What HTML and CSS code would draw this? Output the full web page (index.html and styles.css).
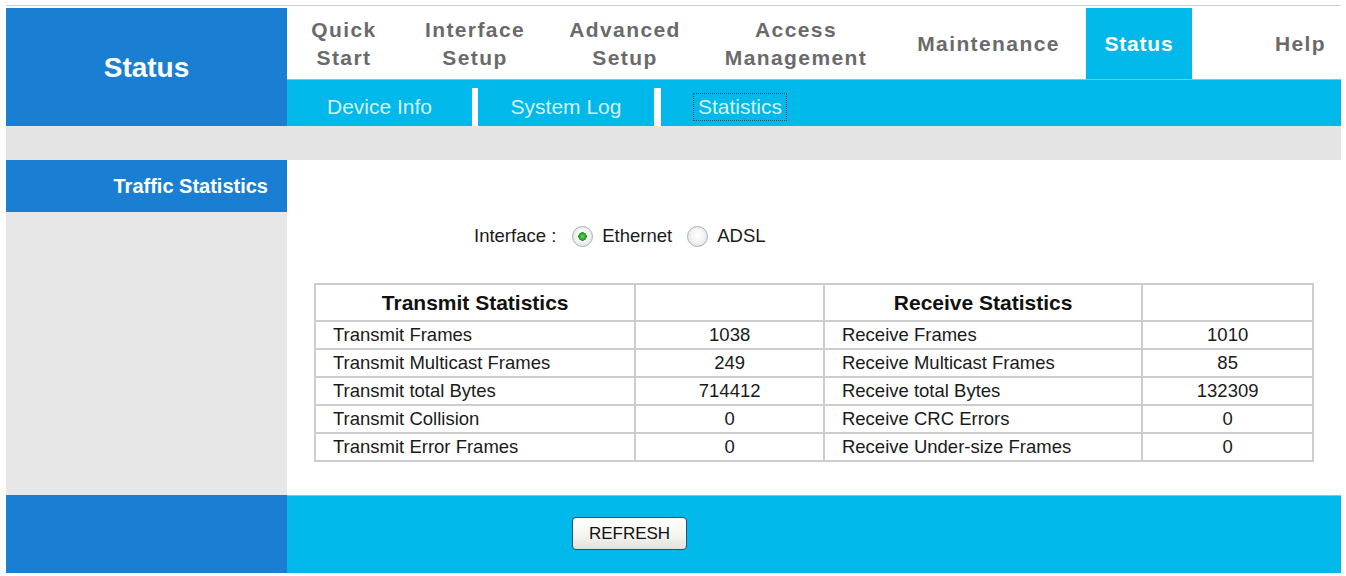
FILE: index.html
```html
<!DOCTYPE html>
<html>
<head>
<meta charset="utf-8">
<title>Status - Statistics</title>
<link rel="stylesheet" href="styles.css">
</head>
<body>
<div class="page">
  <header class="top">
    <div class="brand">Status</div>
    <div class="topright">
      <nav class="mainnav">
        <div class="nav-item w-quick">Quick<br>Start</div>
        <div class="nav-item w-iface">Interface<br>Setup</div>
        <div class="nav-item w-adv">Advanced<br>Setup</div>
        <div class="nav-item w-access">Access<br>Management</div>
        <div class="nav-item w-maint">Maintenance</div>
        <div class="nav-item w-status active">Status</div>
        <div class="nav-item w-help">Help</div>
      </nav>
      <div class="subnav">
        <div class="sub-item w-dev">Device Info</div>
        <div class="sub-sep"></div>
        <div class="sub-item w-log">System Log</div>
        <div class="sub-sep sep2"></div>
        <div class="sub-item w-stat"><span class="focus">Statistics</span></div>
      </div>
    </div>
  </header>
  <div class="band"></div>
  <div class="main">
    <aside class="side">
      <div class="side-head">Traffic Statistics</div>
    </aside>
    <section class="content">
      <div class="iface">
        <span class="iface-label">Interface :</span>
        <input type="radio" class="radio" name="if" checked>
        <span class="opt">Ethernet</span>
        <input type="radio" class="radio" name="if">
        <span class="opt">ADSL</span>
      </div>
      <table class="stats">
        <tr class="head">
          <th class="c1">Transmit Statistics</th>
          <th class="c2"></th>
          <th class="c3">Receive Statistics</th>
          <th class="c4"></th>
        </tr>
        <tr>
          <td class="lbl">Transmit Frames</td><td class="num">1038</td>
          <td class="lbl">Receive Frames</td><td class="num">1010</td>
        </tr>
        <tr>
          <td class="lbl">Transmit Multicast Frames</td><td class="num">249</td>
          <td class="lbl">Receive Multicast Frames</td><td class="num">85</td>
        </tr>
        <tr>
          <td class="lbl">Transmit total Bytes</td><td class="num">714412</td>
          <td class="lbl">Receive total Bytes</td><td class="num">132309</td>
        </tr>
        <tr>
          <td class="lbl">Transmit Collision</td><td class="num">0</td>
          <td class="lbl">Receive CRC Errors</td><td class="num">0</td>
        </tr>
        <tr>
          <td class="lbl">Transmit Error Frames</td><td class="num">0</td>
          <td class="lbl">Receive Under-size Frames</td><td class="num">0</td>
        </tr>
      </table>
    </section>
  </div>
  <footer class="foot">
    <div class="foot-left"></div>
    <div class="foot-right">
      <button class="btn" type="button">REFRESH</button>
    </div>
  </footer>
</div>
</body>
</html>
```

FILE: styles.css
```css
* { box-sizing: border-box; }

html, body {
  margin: 0;
  padding: 0;
  background: #ffffff;
}

body {
  font-family: "Liberation Sans", Arial, sans-serif;
  color: #1a1a1a;
}

.page {
  margin: 5px 5px 0 6px;
  border-top: 1px solid #cfcfcf;
  padding-top: 2px;
  width: 1335px;
}

/* ---------- header ---------- */
.top {
  display: flex;
  height: 118px;
}

.brand {
  width: 281px;
  flex: none;
  background: #1a7fd3;
  color: #ffffff;
  font-weight: bold;
  font-size: 28px;
  display: flex;
  align-items: center;
  justify-content: center;
  padding-top: 2px;
}

.topright {
  flex: 1;
  display: flex;
  flex-direction: column;
}

.mainnav {
  height: 71px;
  display: flex;
  background: #ffffff;
}

.nav-item {
  flex: none;
  display: flex;
  align-items: center;
  justify-content: center;
  text-align: center;
  font-weight: bold;
  font-size: 21px;
  line-height: 28px;
  letter-spacing: 1.4px;
  color: #6a6a6a;
}

.w-quick { width: 114px; }
.w-iface { width: 148px; }
.w-adv { width: 152px; }
.w-access { width: 190px; }
.w-maint { width: 195px; }
.w-status { width: 106px; }
.w-help {
  width: 149px;
  justify-content: flex-end;
  padding-right: 15px;
}

.nav-item.active {
  background: #00b8ea;
  color: #ffffff;
  letter-spacing: 0.8px;
}

.subnav {
  height: 47px;
  background: #00b8ea;
  border-top: 1px solid #5fd3f3;
  display: flex;
  align-items: flex-end;
}

.sub-item {
  flex: none;
  height: 38px;
  display: flex;
  align-items: center;
  justify-content: center;
  font-size: 21px;
  color: #d6f1fb;
}

.w-dev { width: 185px; }
.w-log { width: 176px; }
.w-stat { width: 158px; }

.sub-sep {
  flex: none;
  width: 6px;
  height: 38px;
  background: #ffffff;
}

.sub-sep.sep2 { width: 7px; }

.focus {
  outline: 1px dotted #4a4a4a;
  outline-offset: 0;
  padding: 1px 4px;
  line-height: 24px;
}

.band {
  height: 34px;
  background: #e4e4e4;
}

/* ---------- main ---------- */
.main {
  display: flex;
}

.side {
  width: 281px;
  flex: none;
  background: #e7e7e7;
}

.side-head {
  height: 52px;
  background: #1a7fd3;
  color: #ffffff;
  font-weight: bold;
  font-size: 20px;
  display: flex;
  align-items: center;
  justify-content: flex-end;
  padding-right: 19px;
}

.content {
  flex: 1;
  padding: 64px 0 33px 0;
}

.iface {
  height: 24px;
  display: flex;
  align-items: center;
  padding-left: 187px;
  font-size: 18.5px;
  color: #1a1a1a;
}

.iface-label {
  margin-right: 16px;
}

.opt {
  margin-left: 9px;
  margin-right: 15px;
}

.radio {
  -webkit-appearance: none;
  appearance: none;
  margin: 0;
  width: 21px;
  height: 21px;
  border-radius: 50%;
  border: 1px solid #9fb0bd;
  background: radial-gradient(circle at 50% 45%, #ffffff 0%, #f4f4f2 45%, #d9dcd9 100%);
  flex: none;
}

.radio:checked {
  background:
    radial-gradient(circle at 50% 50%, #6ad06a 0, #2fa52f 3px, #1f8f1f 4px, transparent 4.5px),
    radial-gradient(circle at 50% 45%, #ffffff 0%, #f4f4f2 45%, #d9dcd9 100%);
}

.stats {
  margin: 35px auto 0 auto;
  width: 1000px;
  border-collapse: collapse;
  border: 2px solid #c2c2c2;
  font-size: 18.5px;
  color: #1a1a1a;
}

.stats th,
.stats td {
  border: 2px solid #cdcdcd;
  padding: 0;
}

.stats tr.head th {
  height: 37px;
  font-weight: bold;
  font-size: 21px;
  color: #111111;
  text-align: center;
}

.stats td {
  height: 28px;
}

.c1 { width: 321px; }
.c2 { width: 189px; }
.c3 { width: 319px; }
.c4 { width: 171px; }

.stats td.lbl {
  text-align: left;
  padding-left: 17px;
}

.stats td.num {
  text-align: center;
}

/* ---------- footer ---------- */
.foot {
  display: flex;
  height: 78px;
}

.foot-left {
  width: 281px;
  flex: none;
  background: #1a7fd3;
}

.foot-right {
  flex: 1;
  background: #00b8ea;
  border-top: 1px solid #5fd3f3;
  padding-top: 21px;
  padding-left: 285px;
}

.btn {
  width: 115px;
  height: 33px;
  font-family: "Liberation Sans", Arial, sans-serif;
  font-size: 17px;
  color: #111111;
  background: linear-gradient(#ffffff, #f3f3ee 60%, #e2e2da);
  border: 1px solid #2f4f6b;
  border-radius: 4px;
  padding: 0;
}
```
